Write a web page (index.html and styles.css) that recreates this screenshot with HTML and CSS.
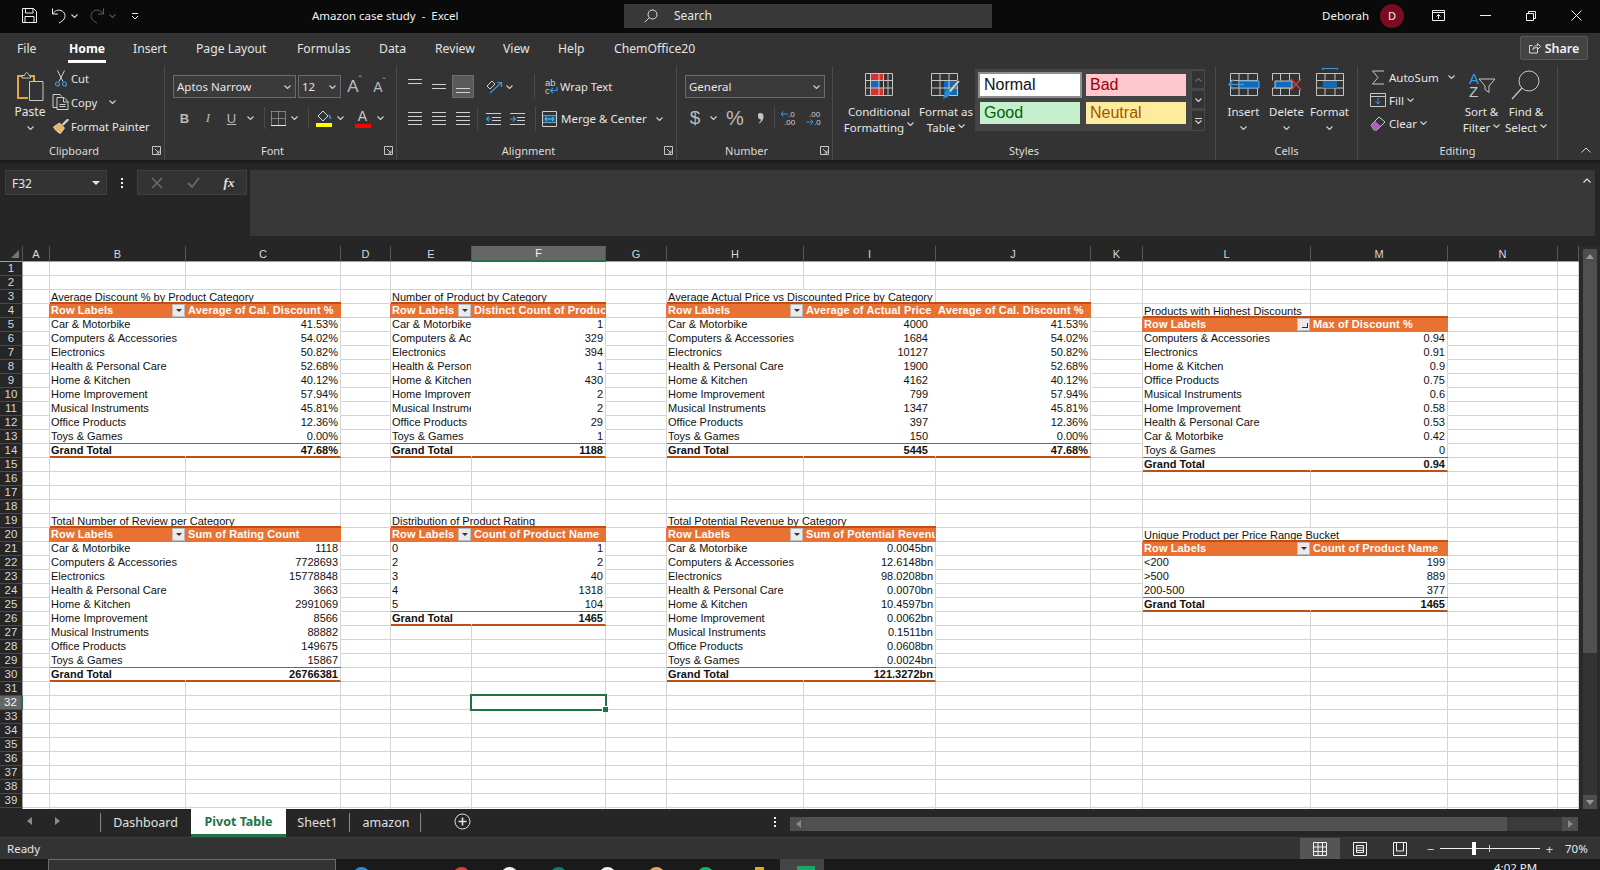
FILE: index.html
```html
<!DOCTYPE html>
<html lang="en">
<head>
  <meta charset="UTF-8">
  <title>Amazon case study - Excel</title>
  <link rel="stylesheet" href="styles.css">
</head>
<body>
  <svg class="defs" aria-hidden="true">
    <symbol id="chev" viewBox="0 0 7 4"><path d="M.5.5l3 3 3-3" fill="none" stroke="#d4d4d4" stroke-width="1.1"/></symbol>
    <symbol id="launcher" viewBox="0 0 9 9"><path d="M.5 8.5V.5h8v8zM3 3l4 4M7 4.5V7H4.500" fill="none" stroke="#c8c8c8"/></symbol>
  </svg>

  <header class="titlebar">
    <div class="qat">
      <svg class="q-save" width="17" height="17" viewBox="0 0 17 17" fill="none" stroke="#f2f2f2"><path d="M1.500 1.500h11l3 3v11h-14zM4.500 1.500v4.500h7.500v-4.500M4 15.500v-6h9v6"/></svg>
      <svg class="q-undo" width="16" height="17" viewBox="0 0 16 17" fill="none" stroke="#f2f2f2"><path d="M1.500 1.500v5.500h5.500M1.500 7C4 3.500 7 2.500 10 3.500c4 1.500 5 5.500 3 8.500-1 1.500-3 3-5 4"/></svg>
      <svg class="q-chev" width="7" height="4"><use href="#chev"/></svg>
      <svg class="q-redo" width="16" height="17" viewBox="0 0 16 17" fill="none" stroke="#5c5c5c"><path d="M14.500 1.500v5.500h-5.500M14.500 7C12 3.500 9 2.500 6 3.500c-4 1.500-5 5.500-3 8.500 1 1.500 3 3 5 4"/></svg>
      <svg class="q-chev dim" width="7" height="4"><use href="#chev"/></svg>
      <svg class="q-more" width="8" height="8" viewBox="0 0 8 8" fill="none" stroke="#e6e6e6"><path d="M1 1.500h6M1 4l3 3 3-3"/></svg>
    </div>
    <div class="doc-title">Amazon case study &nbsp;-&nbsp; Excel</div>
    <div class="searchbox">
      <svg width="14" height="14" viewBox="0 0 14 14" fill="none" stroke="#e0e0e0"><circle cx="8.500" cy="5.500" r="4.500"/><path d="M5.300 8.700L.8 13.200"/></svg>
      <span>Search</span>
    </div>
    <div class="account">Deborah</div>
    <div class="avatar">D</div>
    <div class="winbtns">
      <svg width="13" height="11" viewBox="0 0 13 11" fill="none" stroke="#f2f2f2"><path d="M.5.5h12v10H.5zM.5 2.500h12M6.500 9V4.500M4.500 6.500l2-2 2 2"/></svg>
      <svg width="11" height="1" viewBox="0 0 11 1"><path d="M0 .5h11" stroke="#f2f2f2"/></svg>
      <svg width="10" height="10" viewBox="0 0 10 10" fill="none" stroke="#f2f2f2"><path d="M.5 2.500h7v7h-7zM2.500 2.500v-2h7v7h-2"/></svg>
      <svg width="11" height="11" viewBox="0 0 11 11" fill="none" stroke="#f2f2f2"><path d="M.5.5l10 10M10.500.5l-10 10"/></svg>
    </div>
  </header>

  <nav class="tabs">
    <a>File</a><a class="on">Home</a><a>Insert</a><a>Page Layout</a><a>Formulas</a><a>Data</a><a>Review</a><a>View</a><a>Help</a><a>ChemOffice20</a>
    <button class="share">
      <svg width="12" height="12" viewBox="0 0 12 12" fill="none" stroke="#d8d8d8"><path d="M8.500 5.500v5.500H.5V3.500h3M4 7.500c0-2.500 2-4 4.500-4V1.500l3 3-3 3V5.500c-2 0-3.500.5-4.500 2z"/></svg>
      Share
    </button>
  </nav>

  <section class="ribbon">
    <div class="group g-clip">
      <div class="group-body clip-body">
        <div class="paste">
          <svg width="28" height="30" viewBox="0 0 28 30" fill="none">
            <path d="M7 4H2v22h10" stroke="#e8a33c" stroke-width="2"/>
            <path d="M13 4h5v6" stroke="#e8a33c" stroke-width="2"/>
            <path d="M6 6V3.500h2.500C9 1.500 10 .5 10.500.5S12.500 1.500 13 3.500h1.500V6z" fill="#333" stroke="#c8c8c8"/>
            <path d="M13.500 9.500h13.500v19H13.500z" fill="#333" stroke="#c8c8c8"/>
          </svg>
          <span class="paste-label">Paste</span>
          <svg width="7" height="4"><use href="#chev"/></svg>
        </div>
        <div class="clip-list">
          <div class="clip-item">
            <svg width="14" height="17" viewBox="0 0 14 17" fill="none"><path d="M3.500.5l5.500 11M10.500.5l-5.500 11" stroke="#cfcfcf"/><circle cx="3.500" cy="14" r="2" stroke="#3a96dd" stroke-width="1.200"/><circle cx="10.500" cy="14" r="2" stroke="#3a96dd" stroke-width="1.200"/></svg>
            <span>Cut</span>
          </div>
          <div class="clip-item">
            <svg width="17" height="16" viewBox="0 0 17 16" fill="none" stroke="#d0d0d0"><path d="M4.500 13.500H.5V.5h7l1.500 2"/><path d="M4.500 3.500h7l4 4v8h-11zM11 3.500v4.500h4.500M7 10.500h6M7 12.500h6"/></svg>
            <span>Copy</span>
            <svg class="copy-chev" width="7" height="4"><use href="#chev"/></svg>
          </div>
          <div class="clip-item">
            <svg width="17" height="16" viewBox="0 0 17 16" fill="none"><path d="M1 9l6-4 5 5-4 5.500c-2-.5-5-3-7-6.500z" fill="#f0b25c" stroke="#e8e8e8" stroke-width=".8"/><path d="M9.500 6.500L15 1l1 1-5.500 5.500" fill="#ddd" stroke="#ddd"/></svg>
            <span>Format Painter</span>
          </div>
        </div>
      </div>
      <div class="group-foot"><i></i><span>Clipboard</span><svg class="launch" width="9" height="9"><use href="#launcher"/></svg></div>
    </div>

    <div class="group g-font">
      <div class="group-body font-body">
        <div class="font-row1">
          <div class="select sel-font"><span>Aptos Narrow</span><svg width="7" height="4"><use href="#chev"/></svg></div>
          <div class="select sel-size"><span>12</span><svg width="7" height="4"><use href="#chev"/></svg></div>
          <div class="grow-a">A<sup>&#710;</sup></div>
          <div class="shrink-a">A<sup>&#711;</sup></div>
        </div>
        <div class="font-row2">
          <b class="bold-b">B</b><i class="ital-i">I</i><u class="und-u">U</u>
          <svg width="7" height="4"><use href="#chev"/></svg>
          <s class="vsep"></s>
          <svg width="15" height="15" viewBox="0 0 15 15" fill="none"><path d="M.5.500h14M.5 7.500h14M7.500.500v14M.5.500v14M14.500.500v14" stroke="#c8c8c8" stroke-dasharray="1 1"/><path d="M0 14.500h15" stroke="#e8e8e8"/></svg>
          <svg width="7" height="4"><use href="#chev"/></svg>
          <s class="vsep"></s>
          <svg width="16" height="18" viewBox="0 0 16 18" fill="none"><path d="M2 7l5-5 5 5-4 4-1 1z" stroke="#d8d8d8"/><path d="M13 6c1 1.500 1.500 3 1.500 4" stroke="#3a96dd" stroke-width="1.500"/><path d="M0 14h16v4H0z" fill="#ffff00"/></svg>
          <svg width="7" height="4"><use href="#chev"/></svg>
          <i class="spacer4"></i>
          <div class="color-a">A<em></em></div>
          <svg width="7" height="4"><use href="#chev"/></svg>
        </div>
      </div>
      <div class="group-foot"><i></i><span>Font</span><svg class="launch" width="9" height="9"><use href="#launcher"/></svg></div>
    </div>

    <div class="group g-align">
      <div class="group-body align-body">
        <div class="align-row">
          <div class="lines top"><i></i><i></i></div>
          <div class="lines mid"><i></i><i></i></div>
          <div class="lines bot on"><i></i><i></i></div>
          <i class="tool-gap"></i>
          <svg class="orient" width="17" height="14" viewBox="0 0 17 14" fill="none"><path d="M1 6l5-5 3 3-5 5z" stroke="#cfcfcf"/><path d="M4 13L15 3M11 2.500h4.500V7" stroke="#3a96dd" stroke-width="1.200"/></svg>
          <svg class="orient-chev" width="7" height="4"><use href="#chev"/></svg>
          <s class="vsep tall"></s>
          <svg class="wrap-ic" width="14" height="17" viewBox="0 0 14 17" fill="none"><text x="1" y="8" class="wrap-txt">ab</text><text x="1" y="16" class="wrap-txt">c</text><path d="M13 9v3.500H7M9 10l-2.500 2.500L9 15" stroke="#3a96dd" stroke-width="1.200"/></svg>
          <span class="align-text">Wrap Text</span>
        </div>
        <div class="align-row">
          <div class="lines l"><i></i><i></i><i></i><i></i></div>
          <div class="lines c"><i></i><i></i><i></i><i></i></div>
          <div class="lines r"><i></i><i></i><i></i><i></i></div>
          <s class="vsep"></s>
          <svg class="indent" width="15" height="12" viewBox="0 0 15 12" fill="none"><path d="M0 .5h15M6 4.500h9M6 7.500h9M0 11.500h15" stroke="#cfcfcf"/><path d="M5 6H0.500M3 3.500L.5 6 3 8.500" stroke="#3a96dd" stroke-width="1.200"/></svg>
          <svg class="indent" width="15" height="12" viewBox="0 0 15 12" fill="none"><path d="M0 .5h15M7 4.500h8M7 7.500h8M0 11.500h15" stroke="#cfcfcf"/><path d="M0 6h5M3 3.500L5.500 6 3 8.500" stroke="#3a96dd" stroke-width="1.200"/></svg>
          <s class="vsep tall"></s>
          <svg class="merge-ic" width="15" height="16" viewBox="0 0 15 16" fill="none"><path d="M.5.500h14v15H.5zM.5 4.500h14M.5 11.500h14" stroke="#cfcfcf"/><path d="M1 4.500h13v7H1z" fill="#1e5f8f"/><path d="M3 8h9M5 6L3 8l2 2M10 6l2 2-2 2" stroke="#6cc0f0"/></svg>
          <span class="align-text">Merge &amp; Center</span>
          <svg class="merge-chev" width="7" height="4"><use href="#chev"/></svg>
        </div>
      </div>
      <div class="group-foot"><i></i><span>Alignment</span><svg class="launch" width="9" height="9"><use href="#launcher"/></svg></div>
    </div>

    <div class="group g-number">
      <div class="group-body number-body">
        <div class="select sel-num"><span>General</span><svg width="7" height="4"><use href="#chev"/></svg></div>
        <div class="number-row">
          <span class="dollar">$</span>
          <svg width="7" height="4"><use href="#chev"/></svg>
          <span class="percent">%</span>
          <svg width="7" height="11" viewBox="0 0 7 11"><path d="M1 1.500C1 .5 2 0 3.500 0 5.500 0 6.500 1.500 6.500 3.500 6.500 6.500 5 9 2 10.500L1.500 10C3 9 3.800 8 4 6.500 2 6.500 1 5 1 3.500z" fill="#c4c4c4"/></svg>
          <s class="vsep"></s>
          <svg width="19" height="16" viewBox="0 0 19 16" fill="none"><text x="8" y="7" class="tiny">.0</text><text x="4" y="15" class="tiny">.00</text><path d="M8 4H1M3.500 1.500L1 4l2.500 2.500" stroke="#3a96dd"/></svg>
          <svg width="19" height="16" viewBox="0 0 19 16" fill="none"><text x="4" y="7" class="tiny">.00</text><text x="9" y="15" class="tiny">.0</text><path d="M1 12h7M5.500 9.500L8 12l-2.500 2.500" stroke="#3a96dd"/></svg>
        </div>
      </div>
      <div class="group-foot"><i></i><span>Number</span><svg class="launch" width="9" height="9"><use href="#launcher"/></svg></div>
    </div>

    <div class="group g-styles">
      <div class="group-body styles-body">
        <div class="big-btn w-cond">
          <svg width="28" height="23" viewBox="0 0 28 23" fill="none">
            <path d="M5 1h13v7H5zM5 15h13v7H5z" fill="#d92f2f"/>
            <path d="M5 8h9v7H5z" fill="#0f6cbd"/>
            <path d="M.5.500h27v22H.5zM.5 7.500h27M.5 15h27M5.500.500v22M14 .5v22M18.500.500v22M23 .5v22" stroke="#c4c4c4"/>
          </svg>
          <span>Conditional</span>
          <span>Formatting <svg width="7" height="4"><use href="#chev"/></svg></span>
        </div>
        <div class="big-btn w-table">
          <svg width="30" height="27" viewBox="0 0 30 27" fill="none">
            <path d="M13 8h14v14H13z" fill="#0f6cbd"/>
            <path d="M.5.500h26v22H.5zM.5 7.500h26M.5 15h26M9 .5v22M18 .5v22" stroke="#c4c4c4"/>
            <path d="M17 18L27 7l2 1.500-9 11z" fill="#ccc" stroke="#333" stroke-width=".6"/>
            <path d="M16 17c3 0 4 2 3.500 4-2 3-5 4.500-8 4.500 2-2 2-6 4.500-8.500z" fill="#2e87d0"/>
          </svg>
          <span>Format as</span>
          <span>Table <svg width="7" height="4"><use href="#chev"/></svg></span>
        </div>
        <div class="gallery">
          <div class="style-grid">
            <div class="st st-normal">Normal</div>
            <div class="st st-bad">Bad</div>
            <div class="st st-good">Good</div>
            <div class="st st-neutral">Neutral</div>
          </div>
          <div class="gallery-btns">
            <div><svg class="flip dim" width="7" height="4"><use href="#chev"/></svg></div>
            <div><svg width="7" height="4"><use href="#chev"/></svg></div>
            <div class="more"><i></i><svg width="7" height="4"><use href="#chev"/></svg></div>
          </div>
        </div>
      </div>
      <div class="group-foot"><i></i><span>Styles</span></div>
    </div>

    <div class="group g-cells">
      <div class="group-body cells-body">
        <div class="cell-btn">
          <svg width="32" height="23" viewBox="0 0 32 23" fill="none">
            <path d="M2.500.500h27v22h-27zM2.500 7.500h27M2.500 15h27M11 .5v22M20 .5v22" stroke="#c4c4c4"/>
            <path d="M11 8h20v7H11z" fill="#0f6cbd" stroke="#5aa7e0"/>
            <path d="M16 11.500H1M6 6.500l-5 5 5 5" stroke="#3a96dd" stroke-width="1.400"/>
          </svg>
          <span>Insert</span><svg width="7" height="4"><use href="#chev"/></svg>
        </div>
        <div class="cell-btn">
          <svg width="31" height="23" viewBox="0 0 31 23" fill="none">
            <path d="M1.500.500h27v6.500M1.500.500v7M1.500 15v7.500h27V17M1.500 15h20M9.500.5v7M9.500 15v7.500M18.500.5v7M18.500 15v7.500" stroke="#c4c4c4"/>
            <path d="M4 8h17v7H4z" fill="#0f6cbd" stroke="#c4c4c4"/>
            <path d="M20 6l10 11M30 6L20 17" stroke="#e0403a" stroke-width="1.300"/>
          </svg>
          <span>Delete</span><svg width="7" height="4"><use href="#chev"/></svg>
        </div>
        <div class="cell-btn">
          <svg class="fmt-ic" width="28" height="28" viewBox="0 0 28 28" fill="none">
            <path d="M6 .5h16M6.500 0v2M21.500 0v2" stroke="#3a96dd"/>
            <path d="M.5 5.500h27v22H.5zM.5 12.500h27M.5 20h27M9 5.500v22M19 5.500v22" stroke="#c4c4c4"/>
            <path d="M7 13h14v7H7z" fill="#0f6cbd"/>
          </svg>
          <span>Format</span><svg width="7" height="4"><use href="#chev"/></svg>
        </div>
      </div>
      <div class="group-foot"><i></i><span>Cells</span></div>
    </div>

    <div class="group g-edit">
      <div class="group-body edit-body">
        <div class="edit-list">
          <div class="edit-item">
            <svg width="13" height="15" viewBox="0 0 13 15" fill="none"><path d="M12.500 1H1l5.500 6.500L1 14h11.500" stroke="#c8c8c8"/></svg>
            <span>AutoSum</span><svg class="sum-chev" width="7" height="4"><use href="#chev"/></svg>
          </div>
          <div class="edit-item">
            <svg width="16" height="14" viewBox="0 0 16 14" fill="none"><path d="M.5.500h15v13H.5zM.5 3.500h15" stroke="#c8c8c8"/><path d="M8 5v6M5.500 8.500L8 11l2.500-2.500" stroke="#3a96dd"/></svg>
            <span>Fill</span><svg width="7" height="4"><use href="#chev"/></svg>
          </div>
          <div class="edit-item">
            <svg width="16" height="15" viewBox="0 0 16 15" fill="none"><path d="M1 9l8-8 6 5-8 8H4z" stroke="#d0d0d0"/><path d="M1 9l4-4 6 5-4 4H4z" fill="#b25cc0"/></svg>
            <span>Clear</span><svg width="7" height="4"><use href="#chev"/></svg>
          </div>
        </div>
        <div class="big-btn w-sort">
          <svg width="28" height="28" viewBox="0 0 28 28" fill="none">
            <text x="1" y="13" class="az blue">A</text>
            <text x="1" y="26" class="az">Z</text>
            <path d="M11 8h16l-6 7v6.500l-4-3V15z" stroke="#c8c8c8"/>
          </svg>
          <span>Sort &amp;</span>
          <span>Filter <svg width="7" height="4"><use href="#chev"/></svg></span>
        </div>
        <div class="big-btn w-find">
          <svg width="30" height="30" viewBox="0 0 30 30" fill="none"><circle cx="18" cy="11" r="10" stroke="#c8c8c8"/><path d="M11 18L1 29" stroke="#c8c8c8" stroke-width="1.200"/></svg>
          <span>Find &amp;</span>
          <span>Select <svg width="7" height="4"><use href="#chev"/></svg></span>
        </div>
      </div>
      <div class="group-foot"><i></i><span>Editing</span></div>
    </div>

    <svg class="collapse" width="10" height="6" viewBox="0 0 10 6"><path d="M.5 5.500l4.500-4.500 4.500 4.500" fill="none" stroke="#d4d4d4"/></svg>
  </section>

  <section class="formula">
    <div class="namebox"><span>F32</span><em></em></div>
    <div class="fdots"><i></i><i></i><i></i></div>
    <div class="fbtns">
      <svg width="12" height="12" viewBox="0 0 12 12"><path d="M1 1l10 10M11 1L1 11" stroke="#6a6a6a" stroke-width="1.600"/></svg>
      <svg width="13" height="11" viewBox="0 0 13 11" fill="none"><path d="M1 6l4 4 7-9" stroke="#6a6a6a" stroke-width="1.800"/></svg>
      <span class="fx">fx</span>
    </div>
    <div class="finput">
      <svg width="8" height="5" viewBox="0 0 8 5"><path d="M.5 4.500L4 1l3.500 3.500" fill="none" stroke="#e0e0e0" stroke-width="1.200"/></svg>
    </div>
  </section>

  <main class="workspace">
    <div class="sheet" id="sheet"></div>
    <div class="vscroll">
      <div class="vbtn"><i class="up"></i></div>
      <div class="vthumb"></div>
      <div class="vbtn"><i class="down"></i></div>
    </div>
  </main>

  <div class="sheetbar">
    <div class="sheet-nav"><i class="arr-l"></i><i class="arr-r"></i></div>
    <a class="stab first">Dashboard</a>
    <a class="stab active">Pivot Table</a>
    <a class="stab sheet1">Sheet1</a>
    <a class="stab amazon">amazon</a>
    <svg class="addsheet" width="17" height="17" viewBox="0 0 17 17" fill="none"><circle cx="8.500" cy="8.500" r="7.500" stroke="#e4e4e4"/><path d="M8.500 4.500v8M4.500 8.500h8" stroke="#e4e4e4" stroke-width="1.600"/></svg>
    <div class="fdots bar-dots"><i></i><i></i><i></i></div>
    <div class="hscroll">
      <div class="hbtn"><i class="arr-l"></i></div>
      <div class="hthumb"></div>
      <div class="hbtn"><i class="arr-r"></i></div>
    </div>
  </div>

  <footer class="status">
    <span class="ready">Ready</span>
    <div class="view-btn on"><svg width="14" height="14" viewBox="0 0 14 14" fill="none" stroke="#f0f0f0"><path d="M.5.500h13v13H.5zM.5 5h13M.5 9.500h13M5 .5v13M9.500.5v13"/></svg></div>
    <div class="view-btn"><svg width="14" height="14" viewBox="0 0 14 14" fill="none" stroke="#f0f0f0"><path d="M.5.500h13v13H.5zM3.500 3.500h7v7h-7zM3.500 6h7M3.500 8.500h7"/></svg></div>
    <div class="view-btn"><svg width="14" height="14" viewBox="0 0 14 14" fill="none" stroke="#f0f0f0"><path d="M.5.500h13v13H.5zM3.500.5v8.500h7V.5"/></svg></div>
    <span class="zoom-sign minus">&minus;</span>
    <div class="zoom-track"><i class="zoom-mid"></i><i class="zoom-thumb"></i></div>
    <span class="zoom-sign plus">+</span>
    <span class="zoom-val">70%</span>
  </footer>

  <div class="taskbar">
    <div class="task-search"></div>
    <i class="dot d-blue"></i><i class="dot d-red"></i><i class="dot d-white"></i><i class="dot d-teal"></i><i class="dot d-white2"></i><i class="dot d-tan"></i><i class="dot d-green"></i><i class="dot d-yellow"></i>
    <div class="task-active"><i></i></div>
    <span class="clock">4:02 PM</span>
  </div>

  <script src="sheet.js"></script>
</body>
</html>
```

FILE: styles.css
```css
* { box-sizing: border-box; }
html, body { margin: 0; padding: 0; height: 870px; overflow: hidden; }
body { display: flex; flex-direction: column; background: #262626; color: #e6e6e6; font-family: "Noto Sans", "Liberation Sans", sans-serif; font-size: 12px; }
.defs { display: none; }
svg { display: block; flex: none; }
s { text-decoration: none; }
.flip { transform: rotate(180deg); }
.dim { opacity: .35; }
.tiny { font: 8px "Liberation Sans", sans-serif; fill: #d0d0d0; stroke: none; }
.wrap-txt { font: 9.500px "Liberation Sans", sans-serif; fill: #d0d0d0; stroke: none; }
.az { font: 15px "Liberation Sans", sans-serif; fill: #c8c8c8; stroke: none; }
.az.blue { fill: #3a96dd; }

/* title bar */
.titlebar { height: 33px; background: #0a0a0a; display: flex; align-items: center; flex: none; padding-bottom: 2px; }
.qat { width: 312px; display: flex; align-items: center; padding-left: 21px; }
.q-undo { margin-left: 13px; }
.q-chev { margin-left: 4px; }
.q-redo { margin-left: 11px; }
.q-more { margin-left: 15px; }
.doc-title { width: 312px; color: #f2f2f2; font-size: 11.500px; }
.searchbox { width: 368px; height: 24px; background: #383838; display: flex; align-items: center; gap: 16px; padding-left: 20px; font-size: 12px; }
.account { width: 377px; text-align: right; font-size: 11.500px; color: #f2f2f2; }
.avatar { width: 24px; height: 24px; border-radius: 50%; background: #7a0c20; margin-left: 11px; display: flex; align-items: center; justify-content: center; font-size: 11px; color: #eee; }
.winbtns { display: grid; grid-template-columns: 13px 11px 10px 11px; column-gap: 35px; align-items: center; margin-left: 28px; }

/* ribbon tabs */
.tabs { height: 30px; background: #333; flex: none; display: grid; grid-template-columns: 51px 65px 63px 101px 82px 56px 68px 55px 56px 1fr 68px; padding-left: 17px; padding-right: 12px; align-items: center; font-size: 12.200px; color: #e4e4e4; }
.tabs a { display: flex; height: 30px; align-items: center; white-space: nowrap; }
.tabs a.on { font-weight: 700; color: #fff; width: 38px; justify-content: center; border-bottom: 3px solid #fff; padding-top: 3px; }
.share { height: 24px; background: #444; border: 1px solid #5a5a5a; border-radius: 2px; color: #f0f0f0; font: 600 12.500px "Noto Sans", sans-serif; display: flex; align-items: center; justify-content: center; gap: 4px; padding: 0; }

/* ribbon */
.ribbon { height: 97px; background: #333; flex: none; display: flex; box-shadow: 0 2px 3px rgba(0,0,0,.4); position: relative; font-size: 11.500px; color: #e6e6e6; }
.group { height: 94px; display: flex; flex-direction: column; border-right: 1px solid #4a4a4a; margin-top: 3px; flex: none; }
.group-body { height: 76px; display: flex; }
.group-foot { height: 18px; margin-top: -1px; display: grid; grid-template-columns: 1fr auto 1fr; align-items: center; text-align: center; font-size: 11px; color: #dcdcdc; }
.group-foot i { display: block; }
.g-clip .group-foot, .g-font .group-foot, .g-align .group-foot, .g-number .group-foot { padding-right: 16px; }
.launch { justify-self: end; margin-right: -13px; }
.g-clip { width: 165px; }
.g-font { width: 232px; }
.g-align { width: 280px; }
.g-number { width: 156px; }
.g-styles { width: 383px; }
.g-cells { width: 142px; }
.g-edit { width: 200px; }
.collapse { position: absolute; right: 9px; bottom: 7px; }
.select { height: 23px; border: 1px solid #6a6a6a; background: #3a3a3a; display: flex; align-items: center; justify-content: space-between; padding: 0 4px 0 3px; color: #e6e6e6; font-size: 11.500px; }

/* clipboard */
.clip-body { padding-left: 15px; }
.paste { width: 30px; display: flex; flex-direction: column; align-items: center; padding-top: 6px; }
.paste-label { margin-top: 2px; font-size: 12px; line-height: 16px; }
.paste svg + .paste-label + svg { margin-top: 6px; }
.clip-list { margin-left: 6px; display: flex; flex-direction: column; padding-top: 3px; gap: 6px; font-size: 11.200px; }
.clip-item { display: flex; align-items: center; height: 18px; white-space: nowrap; }
.clip-item > svg:first-child { width: 20px; margin-right: 0; }
.copy-chev { margin-left: 12px; }

/* font */
.font-body { flex-direction: column; padding: 9px 0 0 8px; }
.font-row1 { display: flex; align-items: center; }
.sel-font { width: 123px; }
.sel-size { width: 43px; margin-left: 2px; }
.grow-a, .shrink-a { font: 16px "Liberation Sans", sans-serif; color: #bdbdbd; width: 25px; text-align: center; display: flex; justify-content: center; }
.grow-a { margin-left: 1px; font-size: 17px; }
.shrink-a { font-size: 14px; }
.grow-a sup, .shrink-a sup { font-size: 10px; line-height: 8px; color: #8ab8dc; }
.font-row2 { display: grid; grid-template-columns: 23px 24px 23px 14px 14px 15px 16px 13px 17px 16px 5px 19px 16px; align-items: center; justify-items: center; margin-top: 8px; height: 24px; }
.bold-b { font: 700 13px "Liberation Sans", sans-serif; color: #b8b8b8; }
.ital-i { font: italic 13px "Liberation Serif", serif; color: #b8b8b8; }
.und-u { font: 13px "Liberation Sans", sans-serif; color: #b8b8b8; }
.spacer4 { display: block; }
.vsep { display: block; width: 1px; height: 22px; background: #4a4a4a; }
.vsep.tall { height: 25px; }
.color-a { font: 14px/14px "Liberation Sans", sans-serif; color: #c8c8c8; display: flex; flex-direction: column; align-items: center; width: 17px; }
.color-a em { display: block; height: 4px; width: 16px; background: #f00; margin-top: 1px; }

/* alignment */
.align-body { flex-direction: column; padding: 9px 0 0 7px; gap: 9px; }
.align-row { display: flex; align-items: center; height: 23px; }
.lines { width: 22px; height: 23px; margin-right: 2px; display: flex; flex-direction: column; align-items: center; gap: 3px; justify-content: center; }
.lines i { display: block; height: 1px; width: 14px; background: #d0d0d0; }
.lines.top { justify-content: flex-start; padding-top: 4px; }
.lines.bot { justify-content: flex-end; padding-bottom: 4px; }
.lines.on { background: #5a5a5a; border: 1px solid #6e6e6e; }
.lines.l { align-items: flex-start; padding-left: 4px; }
.lines.r { align-items: flex-end; padding-right: 4px; }
.tool-gap { width: 10px; }
.orient { margin-right: 3px; }
.orient-chev { margin-right: 21px; }
.wrap-ic { margin-left: 9px; margin-right: 2px; }
.align-text { white-space: nowrap; font-size: 11.500px; }
.align-row:first-child .align-text { font-size: 11.200px; }
.indent { margin-left: 9px; }
.align-row .lines.r + .vsep { margin-left: 1px; margin-right: -1px; }
.align-row .indent + .vsep { margin-left: 10px; margin-right: 6px; }
.merge-ic { margin-right: 4px; }
.merge-chev { margin-left: 9px; }

/* number */
.number-body { flex-direction: column; padding: 9px 0 0 8px; }
.sel-num { width: 140px; }
.number-row { display: grid; grid-template-columns: 20px 16px 28px 22px 6px 24px 26px; align-items: center; justify-items: center; height: 24px; margin-top: 8px; }
.dollar { font: 19px "Liberation Sans", sans-serif; color: #bdbdbd; }
.percent { font: 20px "Liberation Sans", sans-serif; color: #bdbdbd; }

/* styles */
.big-btn { display: flex; flex-direction: column; align-items: center; line-height: 16px; white-space: nowrap; }
.big-btn span { display: flex; align-items: center; gap: 3px; }
.w-cond { width: 92px; padding-top: 7px; }
.w-cond svg:first-child { margin-bottom: 8px; }
.w-table { width: 50px; padding-top: 7px; margin-left: -4px; }
.w-table svg:first-child { margin-bottom: 4px; margin-left: 0; }
.gallery { margin-top: 3px; margin-left: 4px; width: 230px; height: 62px; background: #444; display: flex; padding: 2px 0 0 1px; }
.style-grid { display: grid; grid-template-columns: 110px 100px; grid-template-rows: 28px 28px; align-items: center; width: 212px; }
.st { height: 22px; width: 100px; font: 16px/21px "Liberation Sans", sans-serif; padding-left: 4px; margin-left: 4px; }
.st-normal { background: #fff; color: #111; outline: 2px solid #8e8e8e; }
.st-bad { background: #ffc7ce; color: #9c0006; margin-left: 0; }
.st-good { background: #c6efce; color: #006100; }
.st-neutral { background: #ffeb9c; color: #9c5700; margin-left: 0; }
.gallery-btns { width: 14px; margin-left: 3px; display: flex; flex-direction: column; gap: 1px; margin-top: -1px; }
.gallery-btns div { height: 19px; background: #333; border: 1px solid #4a4a4a; display: flex; flex-direction: column; align-items: center; justify-content: center; gap: 1px; }
.gallery-btns .more { height: 21px; }
.more i { display: block; width: 7px; height: 1px; background: #d4d4d4; }

/* cells */
.cells-body { padding-left: 6px; }
.cell-btn { width: 43px; display: flex; flex-direction: column; align-items: center; padding-top: 7px; line-height: 16px; }
.cell-btn span { margin-top: 8px; }
.cell-btn > svg:last-child { margin-top: 6px; }
.cell-btn .fmt-ic { margin-top: -5px; }

/* editing */
.edit-body { padding-left: 12px; }
.edit-list { width: 90px; display: flex; flex-direction: column; padding-top: 2px; gap: 5px; }
.edit-item { display: flex; align-items: center; height: 18px; gap: 3px; white-space: nowrap; }
.edit-item > svg:first-child { width: 16px; }
.sum-chev { margin-left: 6px; }
.w-sort { width: 43px; padding-top: 5px; }
.w-sort svg:first-child { margin-bottom: 5px; }
.w-find { width: 44px; margin-left: 1px; padding-top: 4px; }
.w-find svg:first-child { margin-bottom: 4px; }

/* formula bar */
.formula { height: 86px; flex: none; background: #262626; display: flex; padding: 10px 5px 10px 5px; align-items: flex-start; }
.namebox { width: 102px; height: 25px; background: #333; border: 1px solid #3f3f3f; display: flex; align-items: center; justify-content: space-between; padding: 1px 6px 0; font-size: 12px; color: #e6e6e6; }
.namebox em { width: 0; height: 0; border: 4px solid transparent; border-top: 4px solid #e6e6e6; border-bottom: 0; }
.fdots { display: flex; flex-direction: column; gap: 2px; align-items: center; }
.fdots i { display: block; width: 2px; height: 2px; background: #eee; }
.formula > .fdots { width: 30px; height: 25px; justify-content: center; }
.fbtns { width: 110px; height: 25px; background: #333; border: 1px solid #3f3f3f; display: grid; grid-template-columns: 37px 36px 36px; align-items: center; justify-items: center; }
.fx { font: italic 700 13px "Liberation Serif", serif; color: #e0e0e0; }
.finput { margin-left: 3px; flex: 1; height: 66px; background: #383838; display: flex; justify-content: flex-end; padding: 8px 4px 0 0; }

/* sheet */
.workspace { height: 563px; flex: none; display: flex; background: #262626; }
.sheet { width: 1579px; height: 563px; overflow: hidden; flex: none; }
.grid { border-collapse: separate; border-spacing: 0; table-layout: fixed; width: 1579px; background: #fff; font: 11px "Liberation Sans", sans-serif; color: #111; }
.grid th { height: 15px; padding: 0; background: #262626; color: #d8d8d8; font-weight: 400; border-right: 1px solid #555; border-bottom: 1px solid #a0a0a0; line-height: 14px; text-align: center; }
.grid tbody th { height: 14px; line-height: 13px; font-size: 11.500px; border-right: 1px solid #a0a0a0; border-bottom: 1px solid #4a4a4a; overflow: hidden; }
.grid th.active { background: #666; color: #f4f4f4; }
.grid thead th.active { border-bottom: 2px solid #217346; }
.grid tbody th.active { border-right: 2px solid #217346; }
.grid th.corner { position: relative; }
.corner i { position: absolute; right: 3px; bottom: 3px; width: 0; height: 0; border-left: 8px solid transparent; border-bottom: 8px solid #777; }
.grid td { height: 14px; padding: 0 2px 0 1px; line-height: 13px; white-space: nowrap; overflow: hidden; border-right: 1px solid #d4d4d4; border-bottom: 1px solid #d4d4d4; background: #fff; }
.col-head { width: 23px; } .col-a { width: 27px; } .col-b { width: 136px; } .col-c { width: 155px; } .col-d { width: 50px; }
.col-e { width: 81px; } .col-f { width: 134px; } .col-g { width: 61px; } .col-h { width: 137px; } .col-i { width: 132px; }
.col-j { width: 155px; } .col-k { width: 52px; } .col-l { width: 168px; } .col-m { width: 137px; } .col-n { width: 110px; } .col-o { width: 21px; }
.grid td.title-cell { vertical-align: top; }
.title-text { height: 12px; line-height: 14px; overflow: hidden; }
.grid td.num { text-align: right; }
.grid td.pad { padding-right: 7px; }
.grid td.body { border-bottom-color: #fff; }
.grid td.inner { border-right-color: #fff; }
.grid td.head { position: relative; padding: 0 2px; background: #e97132; color: #fff; font-weight: 700; letter-spacing: .12px; border-color: #e97132; box-shadow: 0 -2px 0 #c04f15, -1px 0 0 #e97132; }
.grid td.head.has-btn { padding: 0 0 0 1px; }
.grid td.total { position: relative; font-weight: 700; border-bottom: 2px solid #c04f15; box-shadow: 0 -1px 0 #c04f15; line-height: 12px; }
.filter { float: right; width: 13px; height: 13px; background: #eaeaea; border: 1px solid #bcbcbc; display: flex; align-items: center; justify-content: center; }
.filter i { display: block; width: 0; height: 0; border: 3px solid transparent; border-top: 3px solid #333; border-bottom: 0; }
.filter.sorted { align-items: flex-end; justify-content: flex-end; padding: 0 1px 2px 0; }
.filter.sorted i { width: 6px; height: 5px; border: 0; border-right: 1px solid #333; border-bottom: 1px solid #333; background: none; }
.grid td.selected { position: relative; overflow: visible; }
.sel-box { position: absolute; left: -2px; top: -2px; right: -2px; bottom: -2px; border: 2px solid #217346; }
.sel-handle { position: absolute; right: -3px; bottom: -3px; width: 6px; height: 6px; background: #217346; border: 1px solid #fff; border-right: 0; border-bottom: 0; }
.vscroll { width: 21px; background: #2a2a2a; padding: 3px 3px 0 4px; display: flex; flex-direction: column; }
.vbtn { height: 14px; background: #4e4e4e; display: flex; align-items: center; justify-content: center; flex: none; }
.up, .down { display: block; width: 0; height: 0; border: 4px solid transparent; }
.up { border-bottom: 5px solid #999; border-top: 0; }
.down { border-top: 5px solid #999; border-bottom: 0; }
.vthumb { flex: 1; background: linear-gradient(#505050 0 390px, #333 390px); }

/* sheet tabs */
.sheetbar { height: 28px; flex: none; background: #262626; display: flex; align-items: flex-start; font-size: 12.500px; color: #e0e0e0; }
.sheet-nav { width: 100px; height: 24px; display: flex; align-items: center; padding-left: 27px; gap: 23px; }
.arr-l, .arr-r { display: block; width: 0; height: 0; border: 4px solid transparent; }
.arr-l { border-right: 5px solid #8a8a8a; border-left: 0; }
.arr-r { border-left: 5px solid #8a8a8a; border-right: 0; }
.stab { display: flex; align-items: center; justify-content: center; height: 19px; margin-top: 4px; white-space: nowrap; }
.stab.first { width: 91px; border-left: 1px solid #888; padding-right: 1px; }
.stab.active { width: 95px; height: 28px; margin-top: 0; background: #fff; color: #217346; font-weight: 700; border-bottom: 3px solid #217346; }
.stab.sheet1 { width: 64px; border-right: 1px solid #888; }
.stab.amazon { width: 71px; border-right: 1px solid #888; padding-left: 2px; }
.addsheet { margin: 4px 0 0 33px; }
.bar-dots { margin-left: 289px; margin-top: 8px; width: 30px; }
.hscroll { margin-top: 8px; width: 788px; height: 14px; background: #3a3a3a; display: flex; }
.hbtn { width: 16px; background: #4e4e4e; display: flex; align-items: center; justify-content: center; flex: none; }
.hthumb { width: 701px; background: #505050; margin-right: auto; }

/* status bar */
.status { height: 22px; flex: none; background: #333; border-top: 1px solid #3d3d3d; display: flex; align-items: center; font-size: 11.500px; color: #e6e6e6; }
.ready { width: 1300px; padding-left: 7px; }
.view-btn { width: 40px; height: 21px; display: flex; align-items: center; justify-content: center; }
.view-btn.on { background: #555; }
.zoom-sign { width: 11px; font-size: 13px; text-align: center; color: #d0d0d0; }
.minus { margin-left: 5px; }
.zoom-track { width: 100px; height: 1px; background: #f0f0f0; position: relative; margin: 0 4px; }
.zoom-thumb { position: absolute; left: 32px; top: -6px; width: 4px; height: 13px; background: #fff; }
.zoom-mid { position: absolute; left: 49px; top: -3px; width: 1px; height: 7px; background: #ccc; }
.zoom-val { margin-left: 10px; font-size: 11.500px; }

/* windows taskbar */
.taskbar { height: 11px; flex: none; background: #1a1a1a; position: relative; overflow: hidden; }
.task-search { position: absolute; left: 48px; top: 0; width: 288px; height: 11px; background: #333; border: 1px solid #6a6a6a; border-bottom: 0; }
.dot { position: absolute; top: 8px; width: 17px; height: 17px; border-radius: 50%; }
.d-blue { left: 353px; background: #2a8dd4; }
.d-red { left: 453px; background: #e0402f; }
.d-white { left: 501px; background: #f2f2f2; }
.d-teal { left: 550px; background: #0a8070; }
.d-white2 { left: 599px; background: #f2f2f2; }
.d-tan { left: 648px; background: #e8a860; }
.d-green { left: 697px; background: #12b76a; }
.d-yellow { left: 755px; background: #e8a80c; width: 9px; border-radius: 0; }
.task-active { position: absolute; left: 780px; top: 0; width: 44px; height: 11px; background: #444; }
.task-active i { position: absolute; left: 17px; top: 7px; width: 18px; height: 10px; background: #21a366; }
.clock { position: absolute; left: 1494px; top: 1px; color: #f0f0f0; font-size: 11.500px; line-height: 16px; }
```

FILE: sheet.js
```js
const columns = ["a", "b", "c", "d", "e", "f", "g", "h", "i", "j", "k", "l", "m", "n", "o"];
const categories = ["Car & Motorbike", "Computers & Accessories", "Electronics", "Health & Personal Care", "Home & Kitchen", "Home Improvement", "Musical Instruments", "Office Products", "Toys & Games"];

// top = row of the title, col = first column, span = columns the title runs over
const pivots = [
  { top: 3, col: "b", span: 2, title: "Average Discount % by Product Category", heads: ["Row Labels", "Average of Cal. Discount %"],
    labels: categories, values: [["41.53%", "54.02%", "50.82%", "52.68%", "40.12%", "57.94%", "45.81%", "12.36%", "0.00%"]], total: ["47.68%"] },
  { top: 3, col: "e", span: 2, title: "Number of Product by Category", heads: ["Row Labels", "Distinct Count of Product Name"],
    labels: categories, values: [["1", "329", "394", "1", "430", "2", "2", "29", "1"]], total: ["1188"] },
  { top: 3, col: "h", span: 2, title: "Average Actual Price vs Discounted Price by Category", heads: ["Row Labels", "Average of Actual Price", "Average of Cal. Discount %"], padFirst: true,
    labels: categories, values: [["4000", "1684", "10127", "1900", "4162", "799", "1347", "397", "150"], ["41.53%", "54.02%", "50.82%", "52.68%", "40.12%", "57.94%", "45.81%", "12.36%", "0.00%"]], total: ["5445", "47.68%"] },
  { top: 4, col: "l", span: 1, title: "Products with Highest Discounts", heads: ["Row Labels", "Max of Discount %"], sorted: true,
    labels: ["Computers & Accessories", "Electronics", "Home & Kitchen", "Office Products", "Musical Instruments", "Home Improvement", "Health & Personal Care", "Car & Motorbike", "Toys & Games"],
    values: [["0.94", "0.91", "0.9", "0.75", "0.6", "0.58", "0.53", "0.42", "0"]], total: ["0.94"] },
  { top: 19, col: "b", span: 2, title: "Total Number of Review per Category", heads: ["Row Labels", "Sum of Rating Count"],
    labels: categories, values: [["1118", "7728693", "15778848", "3663", "2991069", "8566", "88882", "149675", "15867"]], total: ["26766381"] },
  { top: 19, col: "e", span: 2, title: "Distribution of Product Rating", heads: ["Row Labels", "Count of Product Name"],
    labels: ["0", "2", "3", "4", "5"], values: [["1", "2", "40", "1318", "104"]], total: ["1465"] },
  { top: 19, col: "h", span: 2, title: "Total Potential Revenue by Category", heads: ["Row Labels", "Sum of Potential Revenue"],
    labels: categories, values: [["0.0045bn", "12.6148bn", "98.0208bn", "0.0070bn", "10.4597bn", "0.0062bn", "0.1511bn", "0.0608bn", "0.0024bn"]], total: ["121.3272bn"] },
  { top: 20, col: "l", span: 2, title: "Unique Product per Price Range Bucket", heads: ["Row Labels", "Count of Product Name"],
    labels: ["<200", ">500", "200-500"], values: [["199", "889", "377"]], total: ["1465"] }
];

const cells = {};
const put = (row, col, cell) => { cells[row + col] = cell; };

pivots.forEach(p => {
  const first = columns.indexOf(p.col);
  const width = p.heads.length;
  const classFor = (i, base) => base + (i < width - 1 ? " inner" : "") + (p.padFirst && i === 1 ? " pad" : "");

  put(p.top, p.col, { text: p.title, span: p.span, title: true });
  for (let i = 1; i < p.span; i++) put(p.top, columns[first + i], { skip: true });

  p.heads.forEach((h, i) => {
    const c = { text: h, cls: "head" };
    if (i === 0) { c.cls += " has-btn"; c.filter = p.sorted ? "filter sorted" : "filter"; }
    put(p.top + 1, columns[first + i], c);
  });

  p.labels.forEach((label, n) => {
    const row = p.top + 2 + n;
    put(row, p.col, { text: label, cls: classFor(0, "body") });
    p.values.forEach((v, i) => {
      put(row, columns[first + 1 + i], { text: v[n], cls: classFor(1 + i, "body num") });
    });
  });

  const totalRow = p.top + 2 + p.labels.length;
  put(totalRow, p.col, { text: "Grand Total", cls: classFor(0, "total") });
  p.total.forEach((t, i) => {
    put(totalRow, columns[first + 1 + i], { text: t, cls: classFor(1 + i, "total num") });
  });
});

function esc(s) {
  return s.replace(/&/g, "&amp;").replace(/</g, "&lt;").replace(/>/g, "&gt;");
}

function cellHtml(row, col) {
  const c = cells[row + col];
  if (row === 32 && col === "f") {
    return '<td class="selected"><span class="sel-box"></span><span class="sel-handle"></span></td>';
  }
  if (!c) return "<td></td>";
  if (c.skip) return "";
  const span = c.span > 1 ? ' colspan="' + c.span + '"' : "";
  if (c.title) return '<td class="title-cell"' + span + '><div class="title-text">' + esc(c.text) + "</div></td>";
  const btn = c.filter ? '<span class="' + c.filter + '"><i></i></span>' : "";
  return '<td class="' + c.cls + '">' + btn + esc(c.text) + "</td>";
}

let html = '<table class="grid"><colgroup><col class="col-head">';
columns.forEach(c => { html += '<col class="col-' + c + '">'; });
html += '</colgroup><thead><tr><th class="corner"><i></i></th>';
columns.forEach(c => {
  const label = c === "o" ? "" : c.toUpperCase();
  html += "<th" + (c === "f" ? ' class="active"' : "") + ">" + label + "</th>";
});
html += "</tr></thead><tbody>";
for (let row = 1; row <= 40; row++) {
  html += "<tr><th" + (row === 32 ? ' class="active"' : "") + ">" + row + "</th>";
  columns.forEach(c => { html += cellHtml(row, c); });
  html += "</tr>";
}
html += "</tbody></table>";
document.getElementById("sheet").innerHTML = html;
```
